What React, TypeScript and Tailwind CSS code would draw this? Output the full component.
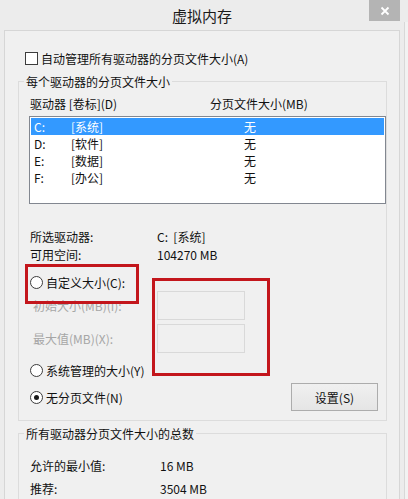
import React from "react";

function Radio({ checked }: { checked?: boolean }) {
  return (
    <span className="flex h-[13px] w-[13px] shrink-0 items-center justify-center rounded-full border border-[#3c3c3c] bg-white">
      {checked && <span className="h-[5px] w-[5px] rounded-full bg-[#1a1a1a]" />}
    </span>
  );
}

const drives = [
  { d: "C:", l: "[系统]", s: "无", sel: true },
  { d: "D:", l: "[软件]", s: "无" },
  { d: "E:", l: "[数据]", s: "无" },
  { d: "F:", l: "[办公]", s: "无" },
];

export default function App() {
  return (
    <div className="relative flex h-[499px] w-[408px] overflow-hidden bg-[#ececec] font-['Noto_Sans_CJK_SC',sans-serif] text-[12px] leading-[17px] text-[#111]">
      <div className="flex w-[404px] flex-col">
        {/* title bar */}
        <div className="flex h-[30px] w-[404px] items-center justify-center text-[15px] text-[#1a1a1a]">
          虚拟内存
        </div>
        {/* content panel */}
        <div className="ml-[4px] h-[469px] w-[396px] border-l border-r border-t border-[#d6d6d6] bg-[#f0f0f0] pt-[18px]">
          <div className="flex h-[18px] items-center gap-[3px] pl-[20px]">
            <span className="h-[13px] w-[13px] border border-[#3c3c3c] bg-white" />
            <span>自动管理所有驱动器的分页文件大小(A)</span>
          </div>

          <fieldset className="ml-[13px] mt-[6px] w-[369px] border border-[#dcdcdc] pb-[9px]">
            <legend className="ml-[5px] px-[2px] leading-[17px]">每个驱动器的分页文件大小</legend>
            <div className="mt-[5px] flex h-[17px] items-center pl-[11px]">
              <span className="w-[180px]">驱动器 [卷标](D)</span>
              <span>分页文件大小(MB)</span>
            </div>
            <div className="ml-[10px] mt-[4px] h-[88px] w-[357px] border border-[#828790] bg-white p-[1px]">
              {drives.map((r) => (
                <div
                  key={r.d}
                  className={
                    r.sel
                      ? "flex h-[17px] items-center bg-[#3399ff] text-white"
                      : "flex h-[17px] items-center"
                  }
                >
                  <span className="w-[40px] pl-[3px]">{r.d}</span>
                  <span className="w-[173px]">{r.l}</span>
                  <span>{r.s}</span>
                </div>
              ))}
            </div>

            <div className="mt-[23px] flex h-[18px] items-center pl-[11px]">
              <span className="w-[127px]">所选驱动器:</span>
              <span>C:&nbsp;&nbsp;[系统]</span>
            </div>
            <div className="flex h-[18px] items-center pl-[11px]">
              <span className="w-[127px]">可用空间:</span>
              <span>104270 MB</span>
            </div>

            <div className="mt-[10px] flex h-[18px] items-center gap-[3px] pl-[11px]">
              <Radio />
              <span>自定义大小(C):</span>
            </div>
            <div className="flex h-[29px] items-center">
              <span className="w-[138px] pl-[14px] text-[#a6a6a6]">初始大小(MB)(I):</span>
              <span className="h-[29px] w-[88px] border border-[#d9d9d9] bg-[#f0f0f0]" />
            </div>
            <div className="mt-[4px] flex h-[29px] items-center">
              <span className="w-[138px] pl-[14px] text-[#a6a6a6]">最大值(MB)(X):</span>
              <span className="h-[29px] w-[88px] border border-[#d9d9d9] bg-[#f0f0f0]" />
            </div>
            <div className="mt-[8px] flex h-[18px] items-center gap-[3px] pl-[11px]">
              <Radio />
              <span>系统管理的大小(Y)</span>
            </div>
            <div className="mt-[4px] flex h-[28px] items-center justify-between pl-[11px] pr-[8px]">
              <div className="flex items-center gap-[3px]">
                <Radio checked />
                <span>无分页文件(N)</span>
              </div>
              <button className="flex h-[28px] w-[87px] items-center justify-center border border-[#acacac] bg-gradient-to-b from-[#f0f0f0] to-[#e5e5e5] text-[12px] text-[#111]">
                设置(S)
              </button>
            </div>
          </fieldset>

          <fieldset className="ml-[13px] mt-[4px] w-[369px] border border-[#dcdcdc] pb-[20px]">
            <legend className="ml-[5px] px-[2px] leading-[17px]">所有驱动器分页文件大小的总数</legend>
            <div className="mt-[14px] flex h-[18px] items-center pl-[11px]">
              <span className="w-[130px]">允许的最小值:</span>
              <span>16 MB</span>
            </div>
            <div className="mt-[5px] flex h-[18px] items-center pl-[11px]">
              <span className="w-[130px]">推荐:</span>
              <span>3504 MB</span>
            </div>
          </fieldset>
        </div>
      </div>
      <div className="mt-[22px] w-[4px] border-l border-[#d8d8d8] bg-[#f2f2f2]" />

      {/* close button */}
      <div className="absolute left-[369px] top-0 flex h-[21px] w-[31px] items-center justify-center bg-[#b4b4b4]">
        <svg width="10" height="10" viewBox="0 0 10 10">
          <path d="M1.5 1.5 L8.5 8.5 M8.5 1.5 L1.5 8.5" stroke="white" strokeWidth="1.8" />
        </svg>
      </div>

      {/* red annotation boxes */}
      <div className="absolute left-[25px] top-[264px] h-[40px] w-[114px] border-[3px] border-[#c3161c]" />
      <div className="absolute left-[152px] top-[278px] h-[98px] w-[118px] border-[3px] border-[#c3161c]" />
    </div>
  );
}
